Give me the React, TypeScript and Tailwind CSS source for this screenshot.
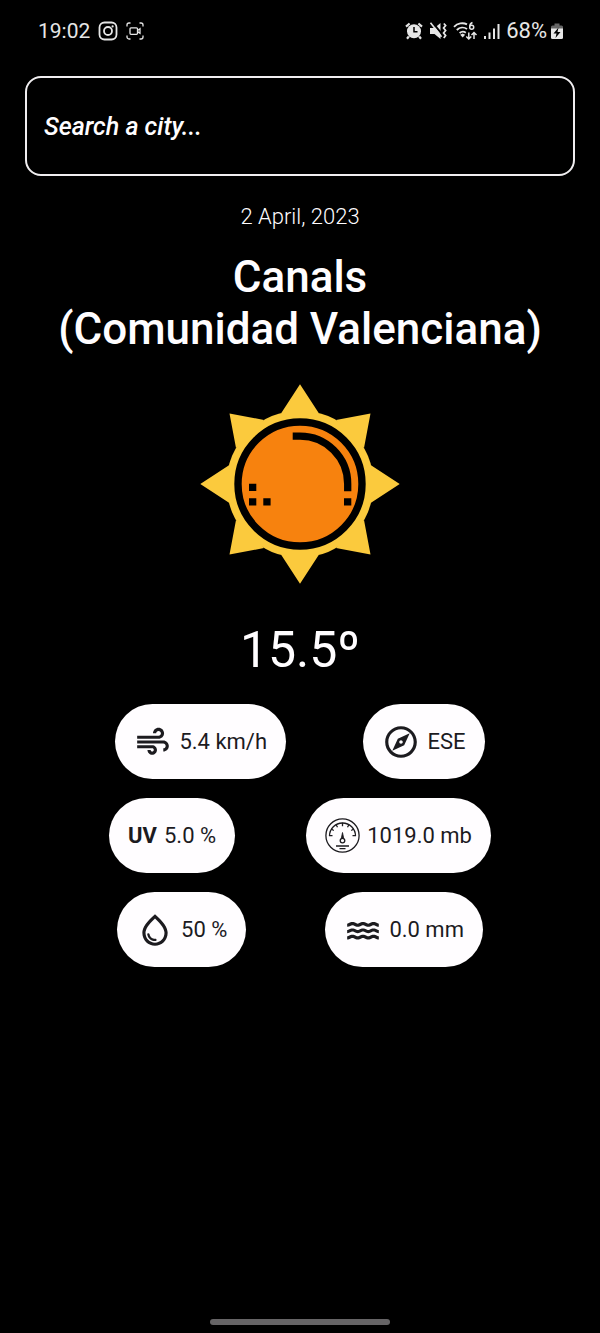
import type { ReactNode } from "react";
import { MdAir, MdOutlineExplore, MdOutlineWaterDrop, MdWater } from "react-icons/md";

function StatusBar() {
  return (
    <header className="flex h-[62px] items-center justify-between pl-[38px] pr-[37px] leading-6 text-[#e6e6e6]">
      <div className="flex items-center gap-2 text-[21px]">
        <time>19:02</time>
        <svg width="20" height="20" viewBox="0 0 20 20" fill="none" stroke="currentColor" strokeWidth="1.8" aria-hidden="true">
          <rect x="1.5" y="1.5" width="17" height="17" rx="5" />
          <circle cx="10" cy="10" r="4" />
          <circle cx="14.6" cy="5.4" r="1.1" fill="currentColor" stroke="none" />
        </svg>
        <svg width="18" height="18" viewBox="0 0 18 18" fill="none" stroke="currentColor" strokeWidth="1.3" aria-hidden="true">
          <path d="M1 4.5V3a2 2 0 0 1 2-2h1.5M13.5 1H15a2 2 0 0 1 2 2v1.5M17 13.5V15a2 2 0 0 1-2 2h-1.5M4.500 17H3a2 2 0 0 1-2-2v-1.500" />
          <rect x="4" y="5.800" width="7.500" height="6.500" rx="1" />
          <path d="M11.500 8.500 14 6.800v4.500l-2.500-1.700" />
        </svg>
      </div>
      <div className="flex items-center gap-[6px] text-[22px]">
        <svg width="18" height="18" viewBox="0 0 18 18" aria-hidden="true">
          <circle cx="9" cy="9.300" r="7" fill="currentColor" />
          <path d="M1 4.600 4.600 1.500M17 4.600l-3.600-3.100M3.800 14.500l-1.800 2.200M14.200 14.500l1.800 2.200" stroke="currentColor" strokeWidth="2.200" />
          <path d="M9 5v4.700h3.500" fill="none" stroke="#000" strokeWidth="1.500" />
        </svg>
        <svg width="18" height="18" viewBox="0 0 18 18" aria-hidden="true">
          <path d="M1 6h4.500L11.500 1v16L5.500 12H1z" fill="currentColor" />
          <path d="M3.300.2 13 12.200" stroke="#000" strokeWidth="2" />
          <path d="m1.500.8 11 14" stroke="currentColor" strokeWidth="1.600" />
          <path d="m14.800 1.500 1.800 2-2 2.500 2 2.500-2 2.500 2 2.500-1.800 2.500" fill="none" stroke="currentColor" strokeWidth="1.800" />
        </svg>
        <svg width="25" height="20" viewBox="0 0 25 20" fill="none" stroke="currentColor" strokeWidth="1.800" aria-hidden="true">
          <path d="M1 5.800C4.500 2.200 10 1.300 14 3.400M3.800 9c3-2.900 7.200-3.200 10.200-1M6.600 12c2-1.700 4.300-1.700 6.200-.3" />
          <path d="m7.200 13.800 2.500-1.200 2.400 1.200-2.400 2.700z" fill="currentColor" stroke="none" />
          <path d="M19.500 1.500c-2 .8-2.800 2.300-2.800 4M16.700 6.200a2 2 0 1 0 4 0 2 2 0 1 0-4 0" strokeWidth="1.500" />
          <path d="M15.800 11.500v6.500m-2.500-2.500 2.500 2.500 2.500-2.500M21 18v-6.500M18.500 14l2.500-2.500 2.500 2.500" strokeWidth="1.500" />
        </svg>
        <svg width="16" height="17" viewBox="0 0 16 17" fill="currentColor" aria-hidden="true">
          <path d="M0 13h2v3H0zM4.500 9.500h2V16h-2zM9 5.500h2V16H9zM13.500 1h2v15h-2z" />
        </svg>
        <div className="flex items-center gap-1">
          <span>68%</span>
          <svg width="12" height="18" viewBox="0 0 12 18" aria-hidden="true">
            <path d="M3.500 1.500h5v2h2A1.500 1.500 0 0 1 12 5v2H0V5a1.500 1.500 0 0 1 1.500-1.500h2z" fill="#666" />
            <path d="M0 6.500h12v9a1.500 1.500 0 0 1-1.500 1.500h-9A1.500 1.500 0 0 1 0 15.500z" fill="currentColor" />
            <path d="M7.500 5.500 2.500 11.500h3l-1 4.500 5-6h-3z" fill="#000" />
          </svg>
        </div>
      </div>
    </header>
  );
}

function Sun() {
  return (
    <svg className="size-50" viewBox="0 0 200 200" role="img" aria-label="Sunny">
      <g fill="#fbca3d">
        <circle cx="100" cy="100" r="73.500" />
        <path d="M100 .3 118.700 29H81.300zM199.700 100 171 118.700V81.300zM100 199.700 81.300 171h37.400zM.3 100 29 81.300v37.400z" />
        <path d="M170.500 29.500 164 64l-28-28zM170.500 170.500 136 164l28-28zM29.500 170.500 36 136l28 28zM29.500 29.500 64 36 36 64z" />
      </g>
      <circle cx="100" cy="100" r="62" fill="#f7820e" stroke="#000" strokeWidth="7.400" />
      <path d="M92.700 52.200h7.300a47.700 47.700 0 0 1 47.700 47.700v7.300" fill="none" stroke="#000" strokeWidth="7.300" />
      <path d="M49 99.700h7.300v7.300H49zM49 114.300h7.300v7.300H49zM63.300 114.300h7.300v7.300h-7.300zM144 114.300h7.300v7.300H144z" />
    </svg>
  );
}

function Gauge() {
  return (
    <svg width="35" height="35" viewBox="0 0 35 35" fill="none" stroke="currentColor" strokeWidth="1.300" aria-hidden="true">
      <circle cx="17.500" cy="17.500" r="16.600" />
      <path d="M4.500 18a13 13 0 0 1 26 0" />
      <path d="M4 17.700h3.500M27.500 17.700H31M6.200 11l2.600 1.500M28.800 11l-2.600 1.500M11 6.500l1.500 2.700M24 6.500l-1.500 2.700M17.500 4.700v3.500" />
      <path d="m17.500 14.500-1.200 5.800h2.400z" fill="currentColor" strokeWidth=".8" />
      <circle cx="17.500" cy="22.600" r="2.300" />
      <path d="M11 28h13M14.500 30.700h6" />
    </svg>
  );
}

function Pill({ icon, label, children }: { icon: ReactNode; label: string; children: ReactNode }) {
  return (
    <li
      aria-label={label}
      className="flex h-[75px] items-center gap-[7px] rounded-full bg-[#fffdff] px-[19px] text-[22px] leading-7 text-[#1c1b1f]"
    >
      {icon}
      <span>{children}</span>
    </li>
  );
}

export default function App() {
  return (
    <div className="flex min-h-screen flex-col bg-black font-['Roboto',sans-serif] text-[#fffdff]">
      <StatusBar />
      <main className="flex flex-col items-center pt-[14px]">
        <div className="w-full px-[25px]">
          <input
            type="text"
            aria-label="Search a city"
            placeholder="Search a city..."
            className="h-25 w-full rounded-2xl border-2 border-[#f0eef0] bg-black px-[17px] text-[25px] font-medium italic outline-none placeholder:text-[#fffdff]"
          />
        </div>
        <p className="mt-[27px] text-[22px] font-light leading-7">2 April, 2023</p>
        <h1 className="mt-5 text-center text-[44px] font-medium leading-[52px]">
          Canals
          <br />
          (Comunidad Valenciana)
        </h1>
        <div className="mt-[29px]">
          <Sun />
        </div>
        <p className="mt-9 text-[50px] leading-[60px]">15.5º</p>
        <div className="mt-6 flex w-full flex-col gap-[19px] px-[38px]">
          <ul className="flex justify-evenly">
            <Pill label="Wind speed" icon={<MdAir size={38} />}>5.4 km/h</Pill>
            <Pill label="Wind direction" icon={<MdOutlineExplore size={38} />}>ESE</Pill>
          </ul>
          <ul className="flex justify-evenly">
            <Pill label="UV index" icon={<b className="font-bold">UV</b>}>5.0 %</Pill>
            <Pill label="Pressure" icon={<Gauge />}>1019.0 mb</Pill>
          </ul>
          <ul className="flex justify-evenly">
            <Pill label="Humidity" icon={<MdOutlineWaterDrop size={38} />}>50 %</Pill>
            <Pill label="Precipitation" icon={<MdWater size={38} />}>0.0 mm</Pill>
          </ul>
        </div>
      </main>
      <div className="mx-auto mb-2 mt-auto h-[6px] w-45 rounded-full bg-[#666466]" />
    </div>
  );
}
